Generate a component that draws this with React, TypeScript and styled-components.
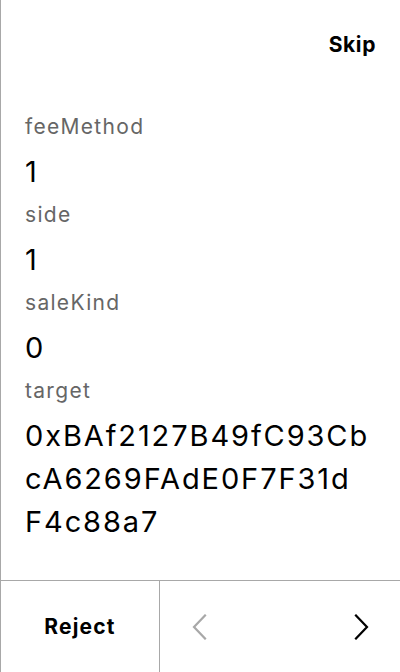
import React from "react";
import styled, { createGlobalStyle } from "styled-components";

const Global = createGlobalStyle`
  html, body { margin: 0; padding: 0; background: #fff; }
  body { font-family: Inter, "Noto Sans", sans-serif; -webkit-font-smoothing: antialiased; }
  * { box-sizing: border-box; }
`;

const Screen = styled.div`
  width: 400px;
  height: 672px;
  display: flex;
  flex-direction: column;
  border-left: 1px solid #a8a8a8;
  background: #fff;
  color: #000;
`;

const Header = styled.div`
  height: 88px;
  display: flex;
  align-items: center;
  justify-content: flex-end;
  padding: 0 24px;
`;

const SkipButton = styled.button`
  border: none;
  background: none;
  padding: 0;
  font-family: inherit;
  font-size: 21px;
  font-weight: 700;
  letter-spacing: 0.6px;
  color: #000;
  cursor: pointer;
`;

const Content = styled.div`
  flex: 1;
  padding: 25px 20px 0 24px;
  display: flex;
  flex-direction: column;
  gap: 8px;
`;

const Field = styled.div`
  display: flex;
  flex-direction: column;
  gap: 9px;
`;

const Label = styled.div`
  font-size: 21px;
  line-height: 28px;
  letter-spacing: 1.3px;
  color: #666;
`;

const Value = styled.div`
  font-size: 29px;
  line-height: 43px;
  letter-spacing: 1.9px;
  color: #000;
`;

const ValueLine = styled.span`
  display: block;
  white-space: nowrap;
`;

const Footer = styled.div`
  height: 92px;
  border-top: 1px solid #a8a8a8;
  display: grid;
  grid-template-columns: 159px 1fr;
`;

const RejectButton = styled.button`
  border: none;
  border-right: 1px solid #a8a8a8;
  background: none;
  padding: 0;
  font-family: inherit;
  font-size: 21px;
  font-weight: 700;
  letter-spacing: 1.2px;
  color: #000;
  cursor: pointer;
`;

const Pager = styled.div`
  display: flex;
  align-items: center;
  justify-content: space-between;
  padding: 0 31px 0 32px;
`;

const Arrow = styled.button<{ $disabled?: boolean }>`
  border: none;
  background: none;
  padding: 0;
  display: flex;
  color: ${(p) => (p.$disabled ? "#a8a8a8" : "#000")};
`;

const Chevron = ({ dir }: { dir: "left" | "right" }) => (
  <svg width="15" height="26" viewBox="0 0 15 26" fill="none">
    <path
      d={dir === "left" ? "M13 1.5 L2 13 L13 24.5" : "M2 1.5 L13 13 L2 24.5"}
      stroke="currentColor"
      strokeWidth="2.2"
      strokeLinecap="square"
      strokeLinejoin="miter"
    />
  </svg>
);

const fields: { label: string; lines: string[] }[] = [
  { label: "feeMethod", lines: ["1"] },
  { label: "side", lines: ["1"] },
  { label: "saleKind", lines: ["0"] },
  { label: "target", lines: ["0xBAf2127B49fC93Cb", "cA6269FAdE0F7F31d", "F4c88a7"] },
];

export default function App() {
  return (
    <>
      <Global />
      <Screen>
        <Header>
          <SkipButton>Skip</SkipButton>
        </Header>
        <Content>
          {fields.map((f) => (
            <Field key={f.label}>
              <Label>{f.label}</Label>
              <Value>
                {f.lines.map((l) => (
                  <ValueLine key={l}>{l}</ValueLine>
                ))}
              </Value>
            </Field>
          ))}
        </Content>
        <Footer>
          <RejectButton>Reject</RejectButton>
          <Pager>
            <Arrow $disabled>
              <Chevron dir="left" />
            </Arrow>
            <Arrow>
              <Chevron dir="right" />
            </Arrow>
          </Pager>
        </Footer>
      </Screen>
    </>
  );
}
